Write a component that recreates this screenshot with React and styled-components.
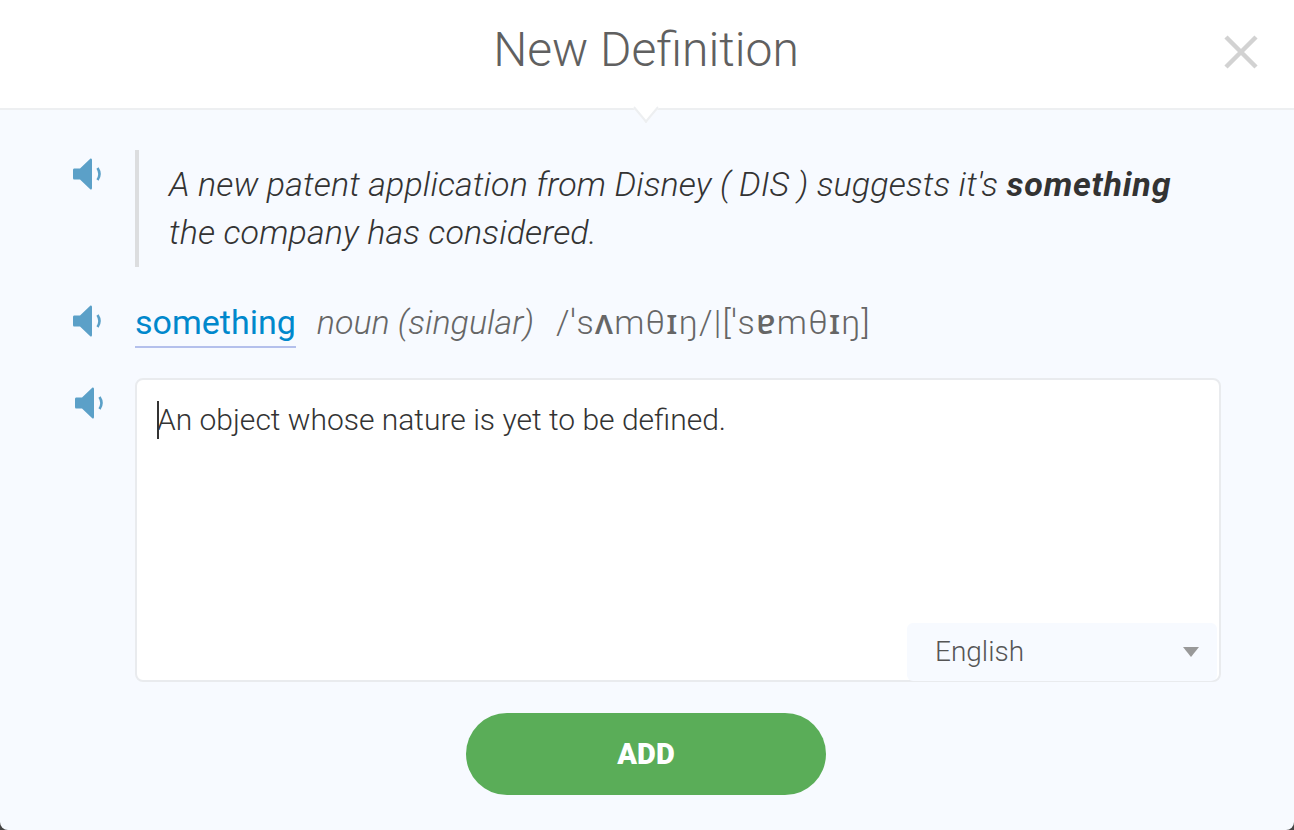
import React from 'react'
import styled, { createGlobalStyle } from 'styled-components'

const Global = createGlobalStyle`
  html, body {
    margin: 0;
    padding: 0;
    height: 100%;
    background: #444;
    font-family: Roboto, "Noto Sans", sans-serif;
  }
  * { box-sizing: border-box; }
`

const Modal = styled.div`
  width: 1294px;
  height: 830px;
  overflow: hidden;
  background: #f7faff;
  border-radius: 0 0 8px 8px;
  display: flex;
  flex-direction: column;
`

const Header = styled.header`
  position: relative;
  height: 110px;
  flex: none;
  background: #fff;
  border-bottom: 2px solid #edeff1;
  display: flex;
  align-items: center;
  justify-content: center;
  padding: 0 2px 9px 0;
`

const Title = styled.h1`
  margin: 0;
  font-size: 48px;
  font-weight: 300;
  color: #606060;
`

const Notch = styled.span`
  position: absolute;
  left: 637px;
  bottom: -9px;
  width: 18px;
  height: 18px;
  background: #fff;
  border-right: 2px solid #edeff1;
  border-bottom: 2px solid #edeff1;
  transform: scaleY(1.2) rotate(45deg);
`

const Close = styled.button`
  position: absolute;
  right: 36px;
  top: 35px;
  width: 34px;
  height: 34px;
  padding: 0;
  border: 0;
  background: none;
  display: flex;
`

const Body = styled.main`
  flex: 1;
  padding: 40px 73px 0 72px;
  display: flex;
  flex-direction: column;
`

const Row = styled.section`
  display: grid;
  grid-template-columns: 63px 1fr;
  margin-top: ${p => p.$top || 0}px;
`

const IconSlot = styled.div`
  padding-top: ${p => p.$top || 0}px;
  padding-left: ${p => p.$left || 0}px;
`

const Quote = styled.blockquote`
  margin: 0;
  padding: 10px 0 11px 30px;
  border-left: 4px solid #dcdddf;
  font-size: 34px;
  letter-spacing: 0.12px;
  line-height: 48px;
  font-style: italic;
  font-weight: 300;
  color: #333;
  b {
    font-weight: 700;
    letter-spacing: 0.8px;
  }
`

const WordLine = styled.div`
  display: flex;
  align-items: flex-start;
  height: 50px;
  font-size: 34px;
  line-height: 48px;
  color: #666;
`

const Word = styled.span`
  color: #0088cc;
  height: 50px;
  border-bottom: 2px solid #b4c0ec;
  margin-right: 21px;
`

const Pos = styled.span`
  font-style: italic;
  font-weight: 300;
  margin-right: 22px;
`

const Phonetic = styled.span`
  font-weight: 300;
  letter-spacing: 1.25px;
`

const IpaVowel = styled.span`
  font-weight: 500;
`

const Editor = styled.div`
  position: relative;
  height: 304px;
  background: #fff;
  border: 2px solid #e9ebee;
  border-radius: 8px;
  padding: 20px 20px;
  font-size: 30px;
  line-height: 40px;
  font-weight: 300;
  color: #333;
`

const Caret = styled.span`
  display: inline-block;
  width: 2px;
  height: 38px;
  background: #333;
  vertical-align: -9px;
  margin-right: -2px;
`

const LangSelect = styled.div`
  position: absolute;
  right: 2px;
  bottom: -1px;
  width: 310px;
  height: 58px;
  background: #f7faff;
  border-radius: 6px;
  padding: 0 18px 0 28px;
  display: flex;
  align-items: center;
  justify-content: space-between;
  font-size: 28px;
  color: #555;
`

const Arrow = styled.span`
  width: 0;
  height: 0;
  border-left: 8px solid transparent;
  border-right: 8px solid transparent;
  border-top: 10px solid #999;
`

const Actions = styled.div`
  display: flex;
  justify-content: center;
  margin-top: 31px;
  padding-right: 1px;
`

const AddButton = styled.button`
  width: 360px;
  height: 82px;
  border: 0;
  border-radius: 41px;
  background: #5aad58;
  color: #fff;
  font-family: inherit;
  font-size: 29px;
  font-weight: 900;
`

const SpeakerIcon = styled.svg`
  display: block;
  margin-left: 1px;
`

const Speaker = () => (
  <SpeakerIcon width="30" height="32" viewBox="0 0 30 32">
    <path d="M1 10.5 L7 10.5 L17.5 0.5 Q19 0 19 2 L19 30 Q19 32 17.5 31.5 L7 21.5 L1 21.5 Q0 21.5 0 20 L0 12 Q0 10.5 1 10.5 Z" fill="#5ba0c8" />
    <path d="M24.5 10 Q28.5 16 24.5 22" fill="none" stroke="#5ba0c8" strokeWidth="2.6" />
  </SpeakerIcon>
)

export default function App() {
  return (
    <Modal>
      <Global />
      <Header>
        <Title>New Definition</Title>
        <Notch />
        <Close aria-label="close">
          <svg width="34" height="34" viewBox="0 0 34 34">
            <path d="M2 2 L32 32 M32 2 L2 32" stroke="#d2d2d2" strokeWidth="4.5" />
          </svg>
        </Close>
      </Header>
      <Body>
        <Row>
          <IconSlot $top={8}><Speaker /></IconSlot>
          <Quote>
            A new patent application from Disney ( DIS ) suggests it's <b>something</b> the company has considered.
          </Quote>
        </Row>
        <Row $top={31}>
          <IconSlot $top={7}><Speaker /></IconSlot>
          <WordLine>
            <Word>something</Word>
            <Pos>noun (singular)</Pos>
            <Phonetic>
              /ˈs<IpaVowel>ʌ</IpaVowel>mθ<IpaVowel>ɪ</IpaVowel>ŋ/|[ˈs<IpaVowel>ɐ</IpaVowel>mθ<IpaVowel>ɪ</IpaVowel>ŋ]
            </Phonetic>
          </WordLine>
        </Row>
        <Row $top={30}>
          <IconSlot $top={9} $left={2}><Speaker /></IconSlot>
          <Editor>
            <Caret />An object whose nature is yet to be defined.
            <LangSelect>
              English
              <Arrow />
            </LangSelect>
          </Editor>
        </Row>
        <Actions>
          <AddButton>ADD</AddButton>
        </Actions>
      </Body>
    </Modal>
  )
}
